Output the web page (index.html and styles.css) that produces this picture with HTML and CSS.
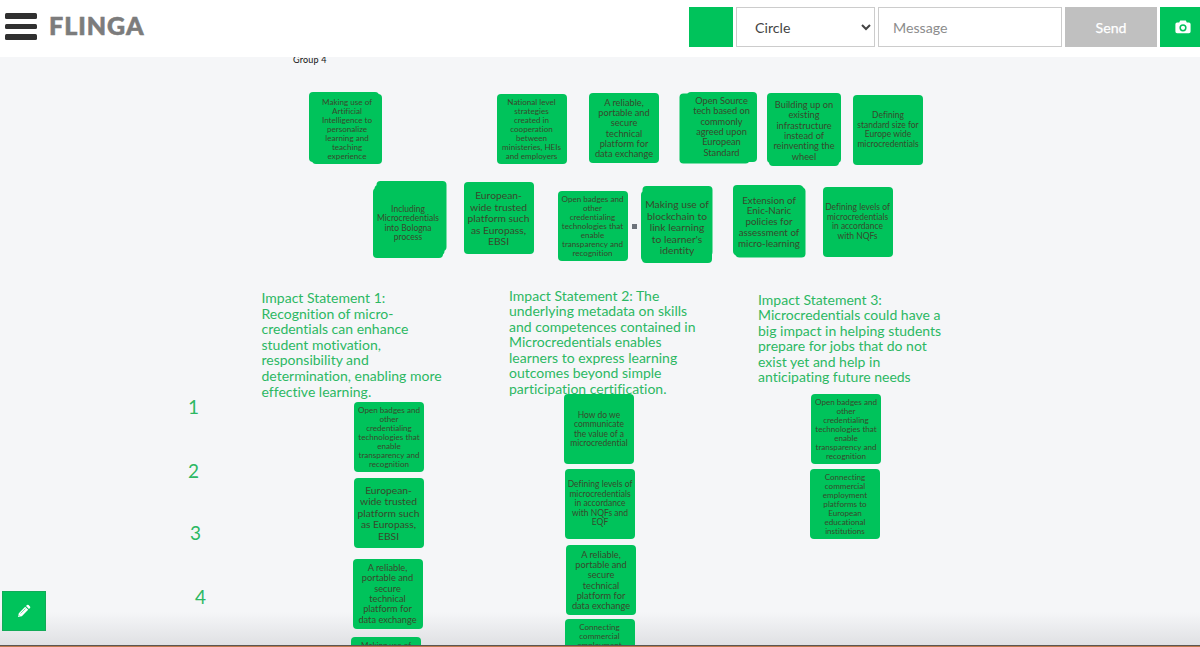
FILE: index.html
```html
<!DOCTYPE html>
<html lang="en">
<head>
  <meta charset="UTF-8">
  <meta name="viewport" content="width=device-width, initial-scale=1.0">
  <title>Flinga</title>
  <link rel="stylesheet" href="styles.css">
</head>
<body>
  <header class="topbar">
    <div class="menu"><span></span><span></span><span></span></div>
    <div class="logo">FLINGA</div>
    <div class="tools">
      <div class="color"></div>
      <select class="shape"><option>Circle</option></select>
      <input class="message" type="text" placeholder="Message">
      <button class="send">Send</button>
      <button class="camera">
        <svg width="16" height="14" viewBox="0 0 16 14">
          <path fill="#fff" fill-rule="evenodd" d="M5.2 0.6h5.6l1 2h2.1a1.7 1.7 0 0 1 1.7 1.7v7.2a1.7 1.7 0 0 1-1.7 1.7H2.1a1.7 1.7 0 0 1-1.7-1.7V4.3a1.7 1.7 0 0 1 1.7-1.7h2.1zM8 4.2a3.6 3.6 0 1 0 0 7.2a3.6 3.6 0 0 0 0-7.2zM8 5.7a2.1 2.1 0 1 1 0 4.2a2.1 2.1 0 0 1 0-4.2z"/>
        </svg>
      </button>
    </div>
  </header>
  <main class="board">
    <div class="group">Group 4</div>

    <!-- first row -->
    <div class="note s1 a1">Making use of<br>Artificial<br>Intelligence to<br>personalize<br>learning and<br>teaching<br>experience</div>
    <div class="note s1 a2">National level<br>strategies<br>created in<br>cooperation<br>between<br>ministeries, HEIs<br>and employers</div>
    <div class="note s3 a3">A reliable,<br>portable and<br>secure<br>technical<br>platform for<br>data exchange</div>
    <div class="note s3 a4">Open Source<br>tech based on<br>commonly<br>agreed upon<br>European<br>Standard</div>
    <div class="note s3 a5">Building up on<br>existing<br>infrastructure<br>instead of<br>reinventing the<br>wheel</div>
    <div class="note s2 a6">Defining<br>standard size for<br>Europe wide<br>microcredentials</div>

    <!-- second row -->
    <div class="note s2 b1">Including<br>Microcredentials<br>into Bologna<br>process</div>
    <div class="note s5 b2">European-<br>wide trusted<br>platform such<br>as Europass,<br>EBSI</div>
    <div class="note s1 b3">Open badges and<br>other<br>credentialing<br>technologies that<br>enable<br>transparency and<br>recognition</div>
    <div class="dot"></div>
    <div class="note s5 b4">Making use of<br>blockchain to<br>link learning<br>to learner's<br>identity</div>
    <div class="note s4 b5">Extension of<br>Enic-Naric<br>policies for<br>assessment of<br>micro-learning</div>
    <div class="note s2 b6">Defining levels of<br>microcredentials<br>in accordance<br>with NQFs</div>

    <div class="statement st1">Impact Statement 1:<br>Recognition of micro-<br>credentials can enhance<br>student motivation,<br>responsibility and<br>determination, enabling more<br>effective learning.</div>
    <div class="statement st2">Impact Statement 2: The<br>underlying metadata on skills<br>and competences contained in<br>Microcredentials enables<br>learners to express learning<br>outcomes beyond simple<br>participation certification.</div>
    <div class="statement st3">Impact Statement 3:<br>Microcredentials could have a<br>big impact in helping students<br>prepare for jobs that do not<br>exist yet and help in<br>anticipating future needs</div>

    <div class="num num1">1</div>
    <div class="num num2">2</div>
    <div class="num num3">3</div>
    <div class="num num4">4</div>

    <!-- ranked notes -->
    <div class="note s1 c1">Open badges and<br>other<br>credentialing<br>technologies that<br>enable<br>transparency and<br>recognition</div>
    <div class="note s5 c2">European-<br>wide trusted<br>platform such<br>as Europass,<br>EBSI</div>
    <div class="note s3 c3">A reliable,<br>portable and<br>secure<br>technical<br>platform for<br>data exchange</div>
    <div class="note s1 c4">Making use of<br>Artificial<br>Intelligence to<br>personalize<br>learning and<br>teaching<br>experience</div>

    <div class="note s2 d1">How do we<br>communicate<br>the value of a<br>microcredential</div>
    <div class="note s2 d2">Defining levels of<br>microcredentials<br>in accordance<br>with NQFs and<br>EQF</div>
    <div class="note s3 d3">A reliable,<br>portable and<br>secure<br>technical<br>platform for<br>data exchange</div>
    <div class="note s1 d4">Connecting<br>commercial<br>employment<br>platforms to<br>European<br>educational<br>institutions</div>

    <div class="note s1 e1">Open badges and<br>other<br>credentialing<br>technologies that<br>enable<br>transparency and<br>recognition</div>
    <div class="note s1 e2">Connecting<br>commercial<br>employment<br>platforms to<br>European<br>educational<br>institutions</div>

    <button class="edit">
      <svg width="14" height="14" viewBox="0 0 14 14">
        <path fill="#fff" d="M1 13l.8-3.8L8.2 2.8l3 3L4.8 12.2zM9 2l1-1q.8-.7 1.6 0l1.4 1.4q.7.8 0 1.6l-1 1z"/>
        <path stroke="#00c35b" stroke-width=".6" fill="none" d="M3.6 9.5l5-5M1.7 11.2l1.1 1.1"/>
      </svg>
    </button>
  </main>
</body>
</html>
```
FILE: styles.css
```css
*{margin:0;padding:0;box-sizing:border-box;}
html,body{width:100%;height:100%;overflow:hidden;}
body{display:flex;flex-direction:column;font-family:Lato,"Liberation Sans",sans-serif;font-variant-ligatures:none;background:#f5f6f8;}

.topbar{flex:none;height:57px;display:flex;align-items:flex-start;background:#fff;position:relative;z-index:2;}
.menu{width:32px;margin:13px 0 0 5px;display:flex;flex-direction:column;gap:5px;}
.menu span{height:5.5px;border-radius:1.5px;background:#303030;}
.logo{margin:10px 0 0 12px;font-size:25px;line-height:30px;font-weight:900;letter-spacing:1px;color:#7c7c7c;-webkit-text-stroke:.6px #7c7c7c;}
.tools{margin-left:auto;padding-top:7px;display:flex;gap:3px;}
.tools>*{height:40px;border-radius:0;font-family:inherit;font-size:14.2px;}
.color{width:44px;background:#00c35b;}
.shape{width:139px;border:1px solid #ccc;background:#fff;color:#444;padding-left:14px;}
.message{width:184px;border:1px solid #ccc;padding:0 14px;color:#444;}
.message::placeholder{color:#8c8c8c;}
.send{width:92px;border:0;background:#c0c0c0;color:#fff;-webkit-text-stroke:.25px #fff;}
.camera{width:40px;border:0;background:#00c35b;display:flex;align-items:center;justify-content:center;padding-left:6px;}

.board{flex:1;position:relative;overflow:hidden;border-bottom:1px solid #c07a4e;background:linear-gradient(#f5f6f8 calc(100% - 34px),#dfe0e3);}
.board::after{content:"";position:absolute;left:0;right:0;bottom:0;height:1px;background:#5b5653;}
.group{position:absolute;left:293px;top:-3px;font-size:9px;line-height:12px;letter-spacing:0.2px;color:#111;}

/* notes, --g is the fill shared with the stacked copies below */
.note{--g:#00c35b;position:absolute;width:70px;height:70px;padding-top:1px;border-radius:4px;background:var(--g);color:#38492c;display:grid;align-content:center;justify-content:center;text-align:center;white-space:nowrap;}
.s1{font-size:8.1px;line-height:9px;}
.s2{font-size:8.5px;line-height:9.5px;}
.s3{font-size:9.25px;line-height:10.3px;}
.s4{font-size:9.8px;line-height:10.8px;}
.s5{font-size:10.3px;line-height:11.4px;}

.a1{left:312px;top:36.5px;box-shadow:-3px -2px var(--g);}
.a2{left:496.5px;top:36.5px;}
.a3{left:589px;top:36px;}
.a4{left:686.5px;top:34.5px;box-shadow:-7.5px 1.5px var(--g);}
.a5{left:769px;top:38.5px;box-shadow:-2px -3px var(--g),2px -3px var(--g);}
.a6{left:853px;top:37.5px;}
.b1{left:373px;top:131px;box-shadow:3.5px -7px var(--g),1.5px -3px var(--g);}
.b2{left:463.5px;top:126.5px;box-shadow:0 -2px var(--g);}
.b3{left:557.5px;top:134px;}
.b4{left:642px;top:135.5px;box-shadow:.5px -7px var(--g),-1px -2px var(--g);}
.b5{left:734px;top:129px;box-shadow:-1px -1px var(--g),1.5px 1.5px var(--g);}
.b6{left:822.5px;top:129.5px;}
.c1{left:354px;top:345px;}
.c2{left:353.5px;top:421px;}
.c3{left:352.5px;top:501.5px;}
.c4{left:351px;top:579.5px;}
.d1{left:564px;top:337px;}
.d2{left:565px;top:411.5px;}
.d3{left:566px;top:488px;}
.d4{left:564.5px;top:562px;}
.e1{left:811px;top:337px;}
.e2{left:810px;top:412px;}
.dot{position:absolute;left:632px;top:167px;width:5px;height:5px;background:#6d737b;}

.statement{position:absolute;font-size:14px;line-height:15.6px;color:#2cb863;white-space:nowrap;}
.st1{left:261.5px;top:233px;}
.st2{left:509px;top:230.5px;}
.st3{left:758px;top:234.5px;}
.num{position:absolute;font-size:19px;line-height:22px;color:#2cb863;}
.num1{left:188px;top:339px;}
.num2{left:188px;top:403px;}
.num3{left:190px;top:465px;}
.num4{left:195px;top:529px;}

.edit{position:absolute;left:2px;top:534px;width:44px;height:40px;border:1px solid #12ab58;background:#00c35b;display:flex;align-items:center;justify-content:center;}
```
